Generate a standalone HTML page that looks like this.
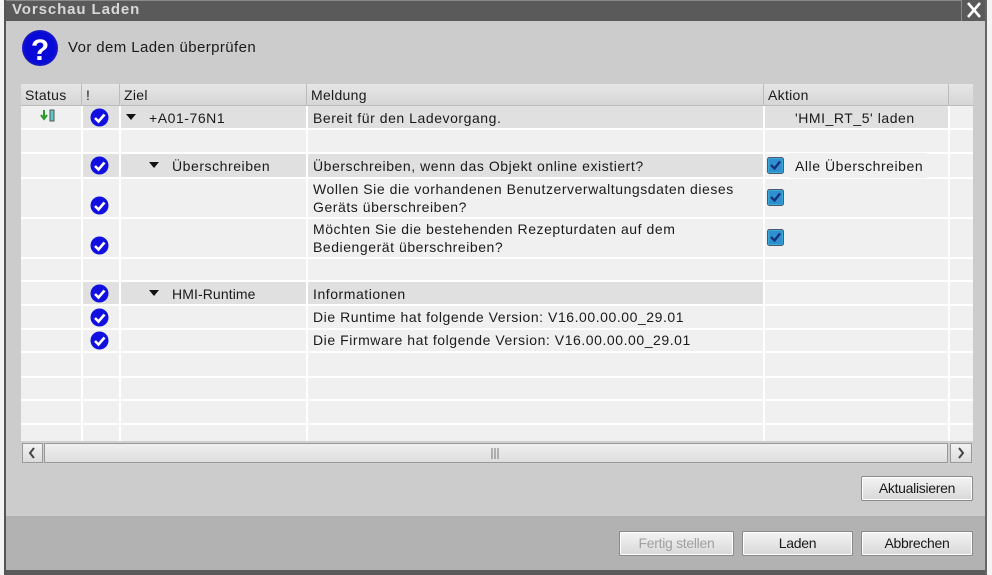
<!DOCTYPE html>
<html><head><meta charset="utf-8">
<style>
*{margin:0;padding:0;box-sizing:border-box}
body{width:992px;height:575px;overflow:hidden;background:#e8e8e8;font-family:"Liberation Sans",sans-serif;font-size:13px;color:#1a1a1a;position:relative}
.a{position:absolute}
#dlg{left:4px;top:0;width:983px;height:575px;background:#cccccc;border-left:2px solid #555;border-right:2px solid #666}
#title{left:0;top:0;width:100%;height:21px;background:#5a5a5a;border-top:1px solid #8a8a8a}
#title span{position:absolute;left:6px;top:0px;color:#d8d8d8;font-weight:bold;font-size:15px;letter-spacing:0.9px}
#close{right:0;top:0;width:24px;height:21px;background:#5a5a5a;border-left:1px solid #888}
#tbl{left:21px;top:84px;width:952px;height:357px;background:#f0f0f0;overflow:hidden}
.hd{top:0;height:22px;background:linear-gradient(#e6e6e6,#d6d6d6);border-right:1px solid #bcbcbc;border-bottom:1px solid #bbb;padding:3px 4px;font-size:14px;letter-spacing:0.3px}
.vl{top:22px;width:2px;background:#fff;height:340px}
.hl{left:0;width:952px;height:2px;background:#fff}
.hi{background:#e0e0e0}
.t{font-size:14px;line-height:18px;white-space:nowrap;letter-spacing:0.55px}
.ck{width:19px;height:19px}
.cb{width:17px;height:17px}
.btn{height:25px;border:1px solid #8a8a8a;border-radius:2px;background:linear-gradient(#f4f4f4,#d8d8d8);text-align:center;line-height:23px;font-size:14px;letter-spacing:-0.3px;color:#1a1a1a;box-shadow:inset 0 0 0 1px #fff}
</style></head><body>
<div class="a" style="left:0;top:0;width:4px;height:575px;background:#f4f4f4"></div>
<div class="a" style="left:987px;top:0;width:5px;height:575px;background:#f4f4f4"></div>
<div id="dlg" class="a">
 <div id="title" class="a"><span>Vorschau Laden</span></div>
 <div id="close" class="a"><svg width="24" height="21"><path d="M6 3 L18 17 M18 3 L6 17" stroke="#fff" stroke-width="2.6"/></svg></div>
 <div class="a" style="left:0;top:516px;width:100%;height:54px;background:#b2b2b2"></div>
 <div class="a" style="left:0;top:570px;width:100%;height:5px;background:#5a5a5a"></div>
</div>
<svg class="a" style="left:21px;top:29px" width="38" height="38"><circle cx="19" cy="19" r="18" fill="#1515c8"/><circle cx="19" cy="19" r="16" fill="#0a0ad8"/><text x="19" y="31" text-anchor="middle" font-family="Liberation Sans" font-weight="bold" font-size="30" fill="#fff">?</text></svg>
<div class="a t" style="left:68px;top:39px;font-size:15px;letter-spacing:0.4px">Vor dem Laden überprüfen</div>

<div id="tbl" class="a">
 <div class="a hd" style="left:0;width:61px">Status</div>
 <div class="a hd" style="left:61px;width:38px">!</div>
 <div class="a hd" style="left:99px;width:187px">Ziel</div>
 <div class="a hd" style="left:286px;width:457px">Meldung</div>
 <div class="a hd" style="left:743px;width:185px">Aktion</div>
 <div class="a hd" style="left:928px;width:24px;border-right:none"></div>
 <div class="a hi" style="left:61px;top:22px;width:867px;height:23px"></div>
 <div class="a hi" style="left:61px;top:69px;width:682px;height:25px"></div>
 <div class="a hi" style="left:61px;top:197px;width:682px;height:24px"></div>
 <div class="a vl" style="left:60px"></div>
 <div class="a vl" style="left:98px"></div>
 <div class="a vl" style="left:285px"></div>
 <div class="a vl" style="left:742px"></div>
 <div class="a vl" style="left:927px"></div>
 <div class="a hl" style="top:44px"></div>
 <div class="a hl" style="top:68px"></div>
 <div class="a hl" style="top:93px"></div>
 <div class="a hl" style="top:133px"></div>
 <div class="a hl" style="top:173px"></div>
 <div class="a hl" style="top:196px"></div>
 <div class="a hl" style="top:220px"></div>
 <div class="a hl" style="top:244px"></div>
 <div class="a hl" style="top:267px"></div>
 <div class="a hl" style="top:292px"></div>
 <div class="a hl" style="top:315px"></div>
 <div class="a hl" style="top:339px"></div>
</div>
<svg class="a" style="left:40px;top:109px" width="18" height="14"><path d="M4 1 V9 M1 6 L4 10 L7 6" stroke="#2a9a2a" stroke-width="2" fill="none"/><rect x="10" y="1" width="4" height="11" fill="#5cc8c8" stroke="#555" stroke-width="1"/></svg>
<svg width="0" height="0" style="position:absolute"><defs><g id="chk"><circle cx="9.5" cy="9.5" r="9" fill="#1010e0"/><path d="M5 10 L8.5 13.5 L14.5 6.5" stroke="#fff" stroke-width="2.6" fill="none"/></g><g id="cbx"><rect x="0.5" y="0.5" width="16" height="16" rx="2" fill="#3aa8d8" stroke="#4a5a6a"/><rect x="2" y="2" width="13" height="13" fill="#2f8fd0"/><path d="M4 8 L7.5 11.5 L13 4.5" stroke="#13327a" stroke-width="2.4" fill="none"/></g></defs></svg>
<svg class="a ck" style="left:90px;top:108px"><use href="#chk"/></svg>
<svg class="a ck" style="left:90px;top:156px"><use href="#chk"/></svg>
<svg class="a ck" style="left:90px;top:196px"><use href="#chk"/></svg>
<svg class="a ck" style="left:90px;top:236px"><use href="#chk"/></svg>
<svg class="a ck" style="left:90px;top:284px"><use href="#chk"/></svg>
<svg class="a ck" style="left:90px;top:308px"><use href="#chk"/></svg>
<svg class="a ck" style="left:90px;top:331px"><use href="#chk"/></svg>
<svg class="a" style="left:126px;top:114px" width="10" height="6"><path d="M0 0 H10 L5 6Z" fill="#111"/></svg>
<svg class="a" style="left:149px;top:162px" width="10" height="6"><path d="M0 0 H10 L5 6Z" fill="#111"/></svg>
<svg class="a" style="left:149px;top:290px" width="10" height="6"><path d="M0 0 H10 L5 6Z" fill="#111"/></svg>
<div class="a t" style="left:149px;top:109px">+A01-76N1</div>
<div class="a t" style="left:172px;top:157px">Überschreiben</div>
<div class="a t" style="left:172px;top:285px;letter-spacing:0.1px">HMI-Runtime</div>
<div class="a t" style="left:313px;top:109px">Bereit für den Ladevorgang.</div>
<div class="a t" style="left:313px;top:157px">Überschreiben, wenn das Objekt online existiert?</div>
<div class="a t" style="left:313px;top:180px">Wollen Sie die vorhandenen Benutzerverwaltungsdaten dieses<br>Geräts überschreiben?</div>
<div class="a t" style="left:313px;top:220px">Möchten Sie die bestehenden Rezepturdaten auf dem<br>Bediengerät überschreiben?</div>
<div class="a t" style="left:313px;top:285px">Informationen</div>
<div class="a t" style="left:313px;top:308px">Die Runtime hat folgende Version: V16.00.00.00_29.01</div>
<div class="a t" style="left:313px;top:331px">Die Firmware hat folgende Version: V16.00.00.00_29.01</div>
<div class="a t" style="left:795px;top:109px">'HMI_RT_5' laden</div>
<div class="a" style="left:789px;top:153px;width:138px;height:25px;background:#f0f0f0"></div>
<div class="a t" style="left:795px;top:157px">Alle Überschreiben</div>
<svg class="a cb" style="left:767px;top:157px"><use href="#cbx"/></svg>
<svg class="a cb" style="left:767px;top:189px"><use href="#cbx"/></svg>
<svg class="a cb" style="left:767px;top:229px"><use href="#cbx"/></svg>
<div class="a" style="left:21px;top:441px;width:952px;height:23px;background:#cfcfcf"></div>
<div class="a" style="left:22px;top:443px;width:21px;height:20px;border:1px solid #999;background:linear-gradient(#f2f2f2,#dcdcdc)"></div>
<div class="a" style="left:44px;top:443px;width:904px;height:20px;border:1px solid #999;background:linear-gradient(#f0f0f0,#dedede)"></div>
<div class="a" style="left:950px;top:443px;width:22px;height:20px;border:1px solid #999;background:linear-gradient(#f2f2f2,#dcdcdc)"></div>
<svg class="a" style="left:27px;top:447px" width="10" height="12"><path d="M7 1 L3 6 L7 11" stroke="#444" stroke-width="2" fill="none"/></svg>
<svg class="a" style="left:956px;top:447px" width="10" height="12"><path d="M3 1 L7 6 L3 11" stroke="#444" stroke-width="2" fill="none"/></svg>
<svg class="a" style="left:491px;top:448px" width="8" height="11"><path d="M1 0V11M4 0V11M7 0V11" stroke="#777" stroke-width="1"/></svg>
<div class="a btn" style="left:861px;top:476px;width:112px">Aktualisieren</div>
<div class="a btn" style="left:619px;top:531px;width:115px;color:#a0a0a0">Fertig stellen</div>
<div class="a btn" style="left:742px;top:531px;width:111px">Laden</div>
<div class="a btn" style="left:861px;top:531px;width:112px">Abbrechen</div>
</body></html>
